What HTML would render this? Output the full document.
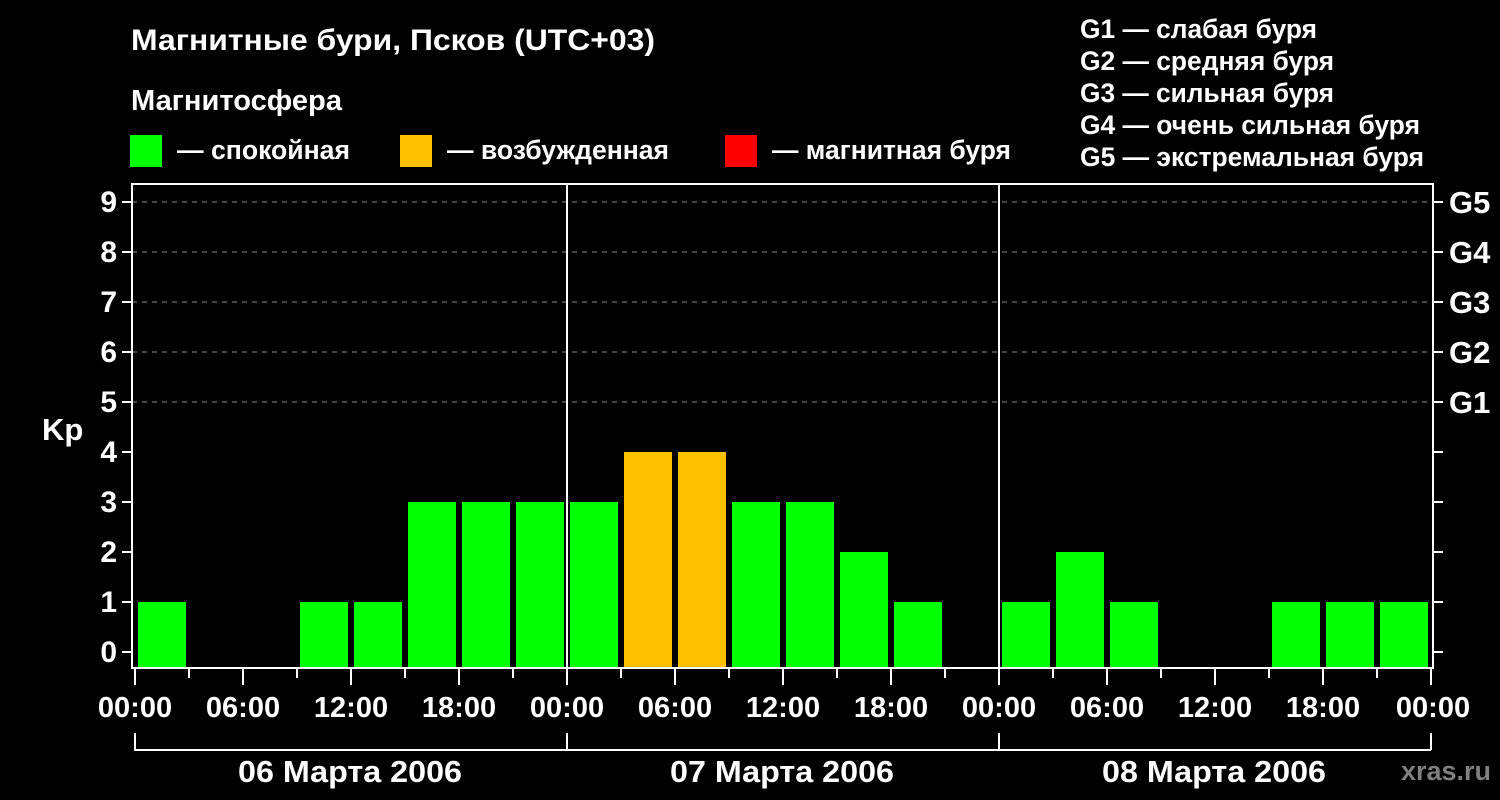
<!DOCTYPE html>
<html><head><meta charset="utf-8"><style>
html,body{margin:0;padding:0;background:#000;}
svg{display:block;}
text{font-family:"Liberation Sans",sans-serif;font-weight:bold;fill:#fff;}
</style></head><body>
<svg width="1500" height="800" xmlns="http://www.w3.org/2000/svg">
<rect width="1500" height="800" fill="#000"/>
<text x="131" y="50" font-size="30" textLength="524" lengthAdjust="spacingAndGlyphs">Магнитные бури, Псков (UTC+03)</text>
<text x="131" y="110" font-size="29" textLength="211" lengthAdjust="spacingAndGlyphs">Магнитосфера</text>
<rect x="130" y="135" width="32" height="32" fill="#00ff00"/>
<text x="177" y="159" font-size="26.6" textLength="173" lengthAdjust="spacingAndGlyphs">— спокойная</text>
<rect x="400" y="135" width="32" height="32" fill="#ffc000"/>
<text x="447" y="159" font-size="26.6" textLength="222" lengthAdjust="spacingAndGlyphs">— возбужденная</text>
<rect x="725" y="135" width="32" height="32" fill="#ff0000"/>
<text x="772" y="159" font-size="26.6" textLength="239" lengthAdjust="spacingAndGlyphs">— магнитная буря</text>
<g font-size="26.4">
<text x="1080" y="38" textLength="237" lengthAdjust="spacingAndGlyphs">G1 — слабая буря</text>
<text x="1080" y="70" textLength="254" lengthAdjust="spacingAndGlyphs">G2 — средняя буря</text>
<text x="1080" y="102" textLength="254" lengthAdjust="spacingAndGlyphs">G3 — сильная буря</text>
<text x="1080" y="134" textLength="340" lengthAdjust="spacingAndGlyphs">G4 — очень сильная буря</text>
<text x="1080" y="166" textLength="344" lengthAdjust="spacingAndGlyphs">G5 — экстремальная буря</text>
</g>
<g stroke="#888" stroke-width="1" stroke-dasharray="5,5">
<line x1="132" y1="202" x2="1432" y2="202"/>
<line x1="132" y1="252" x2="1432" y2="252"/>
<line x1="132" y1="302" x2="1432" y2="302"/>
<line x1="132" y1="352" x2="1432" y2="352"/>
<line x1="132" y1="402" x2="1432" y2="402"/>
</g>
<g fill="#00ff00">
<rect x="138" y="602" width="48" height="65"/>
<rect x="300" y="602" width="48" height="65"/>
<rect x="354" y="602" width="48" height="65"/>
<rect x="408" y="502" width="48" height="165"/>
<rect x="462" y="502" width="48" height="165"/>
<rect x="516" y="502" width="48" height="165"/>
<rect x="570" y="502" width="48" height="165"/>
<rect x="732" y="502" width="48" height="165"/>
<rect x="786" y="502" width="48" height="165"/>
<rect x="840" y="552" width="48" height="115"/>
<rect x="894" y="602" width="48" height="65"/>
<rect x="1002" y="602" width="48" height="65"/>
<rect x="1056" y="552" width="48" height="115"/>
<rect x="1110" y="602" width="48" height="65"/>
<rect x="1272" y="602" width="48" height="65"/>
<rect x="1326" y="602" width="48" height="65"/>
<rect x="1380" y="602" width="48" height="65"/>
</g>
<g fill="#ffc000">
<rect x="624" y="452" width="48" height="215"/>
<rect x="678" y="452" width="48" height="215"/>
</g>
<g stroke="#fff" stroke-width="2" fill="none">
<rect x="132" y="184" width="1301" height="484"/>
<line x1="567" y1="184" x2="567" y2="668"/>
<line x1="999" y1="184" x2="999" y2="668"/>
<path d="M122 202h10M122 252h10M122 302h10M122 352h10M122 402h10M122 452h10M122 502h10M122 552h10M122 602h10M122 652h10"/>
<path d="M1433 202h10M1433 252h10M1433 302h10M1433 352h10M1433 402h10M1433 452h10M1433 502h10M1433 552h10M1433 602h10M1433 652h10"/>
<path d="M135 668v17M189 668v10M243 668v17M297 668v10M351 668v17M405 668v10M459 668v17M513 668v10M567 668v17M621 668v10M675 668v17M729 668v10M783 668v17M837 668v10M891 668v17M945 668v10M999 668v17M1053 668v10M1107 668v17M1161 668v10M1215 668v17M1269 668v10M1323 668v17M1377 668v10M1431 668v17"/>
<path d="M135 733v17H1431M567 733v17M999 733v17M1431 733v17"/>
</g>
<g font-size="30" text-anchor="end">
<text x="117" y="212">9</text><text x="117" y="262">8</text><text x="117" y="312">7</text>
<text x="117" y="362">6</text><text x="117" y="412">5</text><text x="117" y="462">4</text>
<text x="117" y="512">3</text><text x="117" y="562">2</text><text x="117" y="612">1</text>
<text x="117" y="662">0</text>
</g>
<text x="42" y="440" font-size="31">Kp</text>
<g font-size="31">
<text x="1449" y="213">G5</text><text x="1449" y="263">G4</text><text x="1449" y="313">G3</text>
<text x="1449" y="363">G2</text><text x="1449" y="413">G1</text>
</g>
<g font-size="29" text-anchor="middle">
<text x="135" y="717">00:00</text><text x="243" y="717">06:00</text><text x="351" y="717">12:00</text><text x="459" y="717">18:00</text>
<text x="567" y="717">00:00</text><text x="675" y="717">06:00</text><text x="783" y="717">12:00</text><text x="891" y="717">18:00</text>
<text x="999" y="717">00:00</text><text x="1107" y="717">06:00</text><text x="1215" y="717">12:00</text><text x="1323" y="717">18:00</text>
<text x="1433" y="717">00:00</text>
</g>
<g font-size="31" text-anchor="middle">
<text x="350" y="782" textLength="224" lengthAdjust="spacingAndGlyphs">06 Марта 2006</text>
<text x="782" y="782" textLength="224" lengthAdjust="spacingAndGlyphs">07 Марта 2006</text>
<text x="1214" y="782" textLength="224" lengthAdjust="spacingAndGlyphs">08 Марта 2006</text>
</g>
<text x="1401" y="780" font-size="27" style="fill:#808080" textLength="90" lengthAdjust="spacingAndGlyphs">xras.ru</text>
</svg>
</body></html>
